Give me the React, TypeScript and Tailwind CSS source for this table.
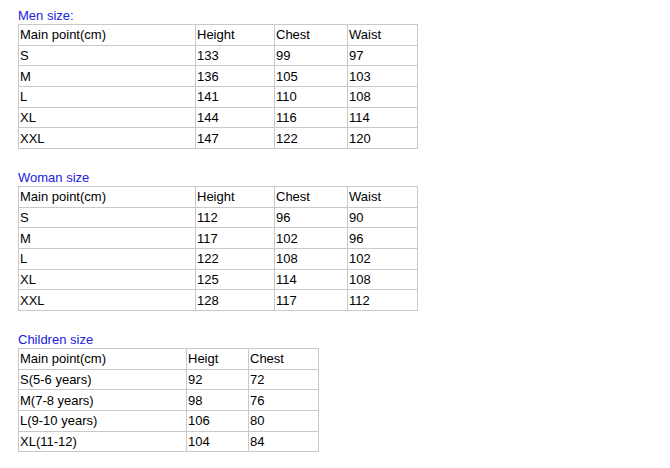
import React from "react";

type Table = {
  title: string;
  head: string[];
  widths: string[];
  rows: string[][];
  className: string;
};

const tables: Table[] = [
  {
    title: "Men size:",
    head: ["Main point(cm)", "Height", "Chest", "Waist"],
    widths: ["w-[177px]", "w-[79px]", "w-[73px]", "w-[70px]"],
    rows: [
      ["S", "133", "99", "97"],
      ["M", "136", "105", "103"],
      ["L", "141", "110", "108"],
      ["XL", "144", "116", "114"],
      ["XXL", "147", "122", "120"],
    ],
    className: "pt-[8px]",
  },
  {
    title: "Woman size",
    head: ["Main point(cm)", "Height", "Chest", "Waist"],
    widths: ["w-[177px]", "w-[79px]", "w-[73px]", "w-[70px]"],
    rows: [
      ["S", "112", "96", "90"],
      ["M", "117", "102", "96"],
      ["L", "122", "108", "102"],
      ["XL", "125", "114", "108"],
      ["XXL", "128", "117", "112"],
    ],
    className: "pt-[21px]",
  },
  {
    title: "Children size",
    head: ["Main point(cm)", "Heigt", "Chest"],
    widths: ["w-[168px]", "w-[62px]", "w-[70px]"],
    rows: [
      ["S(5-6 years)", "92", "72"],
      ["M(7-8 years)", "98", "76"],
      ["L(9-10 years)", "106", "80"],
      ["XL(11-12)", "104", "84"],
    ],
    className: "pt-[21px]",
  },
];

function SizeTable({ t }: { t: Table }) {
  const all = [t.head, ...t.rows];
  return (
    <div className={t.className}>
      <div className="h-[15px] leading-[15px] text-[#2121dc]">{t.title}</div>
      <table className="mt-[1px] table-fixed border-collapse">
        <tbody>
          {all.map((r, i) => (
            <tr key={i}>
              {r.map((c, j) => (
                <td
                  key={j}
                  className={`${t.widths[j]} h-[20.67px] border border-[#c9c9c9] px-[1px] py-0 align-middle leading-[15px] text-black`}
                >
                  {c}
                </td>
              ))}
            </tr>
          ))}
        </tbody>
      </table>
    </div>
  );
}

export default function App() {
  return (
    <div className="h-[468px] w-[670px] bg-white pl-[18px] font-['Liberation_Sans',Arial,sans-serif] text-[13px]">
      {tables.map((t) => (
        <SizeTable key={t.title} t={t} />
      ))}
    </div>
  );
}
